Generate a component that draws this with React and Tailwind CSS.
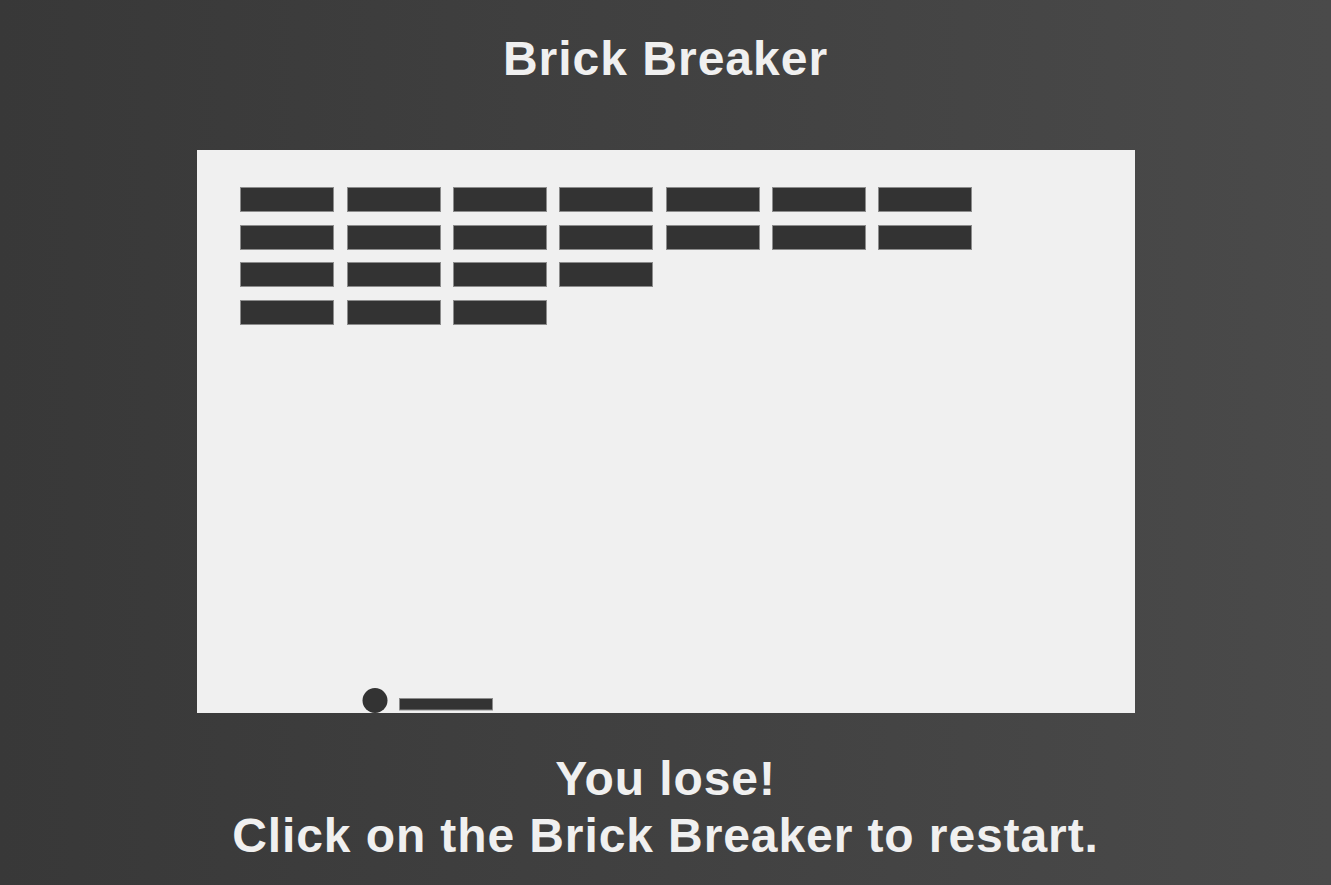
import React from 'react';

const COLS = [240, 347, 453, 559, 666, 772, 878];
const ROWS = [187, 225, 262, 300];
const ROW_COUNTS = [7, 7, 4, 3];

function Board() {
    // canvas offset on page: x 197, y 150
    const ox = 197;
    const oy = 150;
    return (
        <div className="w-[938px] h-[563px] bg-[#f0f0f0] cursor-pointer">
            <svg width="938" height="563" viewBox="0 0 938 563" className="block">
                {ROWS.map((y, r) =>
                    COLS.slice(0, ROW_COUNTS[r]).map((x) => (
                        <rect
                            key={`${r}-${x}`}
                            x={x - ox + 0.5}
                            y={y - oy + 0.5}
                            width="93"
                            height="24"
                            fill="#333333"
                            stroke="#8c8c8c"
                            strokeWidth="1"
                        />
                    ))
                )}
                <circle cx={375 - ox} cy={700.5 - oy} r="12.5" fill="#333333" />
                <rect x={399 - ox + 0.5} y={698 - oy + 0.5} width="93" height="11.5" fill="#333333" stroke="#8c8c8c" strokeWidth="1" />
            </svg>
        </div>
    );
}

export default function App() {
    return (
        <div
            className="min-h-[885px] w-full flex flex-col items-center bg-gradient-to-r from-[#383838] to-[#4a4a4a] text-[#f0f0f0]"
            style={{ fontFamily: '"Liberation Sans", Arial, sans-serif' }}
        >
            <h1 className="mt-[30px] mb-[62px] text-[48px] leading-[1.2] font-bold tracking-[1px]">Brick Breaker</h1>
            <Board />
            <div className="mt-[37px] text-center text-[48px] leading-[1.2] font-bold tracking-[0.9px]">
                <div>You lose!</div>
                <div>Click on the Brick Breaker to restart.</div>
            </div>
        </div>
    );
}
